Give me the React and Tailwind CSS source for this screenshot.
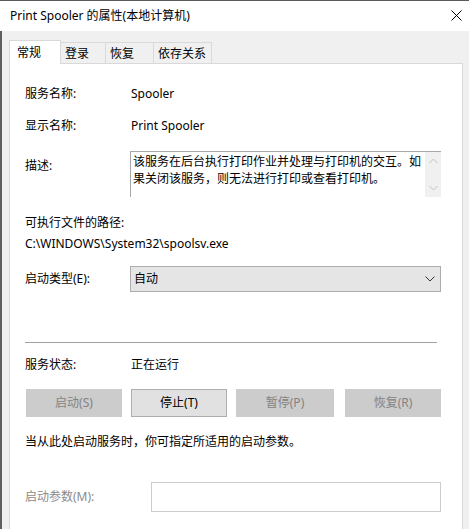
const font = { fontFamily: '"Noto Sans", "Noto Sans CJK SC", sans-serif' };

function Tab({ label, active, width }) {
  if (active) {
    return (
      <div className={`h-[24px] ${width} bg-white border border-[#d9d9d9] border-b-0 -mb-px relative z-10 pl-[7px] pt-[2px] text-[12px] leading-[20px] text-black`}>
        {label}
      </div>
    );
  }
  return (
    <div className={`h-[21px] ${width} bg-[#f0f0f0] border-t border-r border-[#d9d9d9] pl-[4px] pt-[1px] text-[12px] leading-[20px] text-black`}>
      {label}
    </div>
  );
}

function Btn({ label, disabled, width, ml }) {
  return (
    <div
      className={`h-[28px] ${width} ${ml} flex items-center justify-center text-[12px] border ${
        disabled ? "bg-[#cccccc] border-[#cccccc] text-[#838383]" : "bg-[#e1e1e1] border-[#adadad] text-black"
      }`}
    >
      {label}
    </div>
  );
}

export default function App() {
  return (
    <div className="w-[469px] h-[529px] overflow-hidden flex flex-col bg-white" style={font}>
      {/* title bar */}
      <div className="h-[31px] shrink-0 flex items-center justify-between pl-[10px] pr-[7px] bg-white border-t border-[#5a5a5a]">
        <span className="text-[12px] text-black">Print Spooler 的属性(本地计算机)</span>
        <svg width="11" height="11" viewBox="0 0 11 11" className="mb-[1px]">
          <path d="M0.5 0.5 L10.5 10.5 M10.5 0.5 L0.5 10.5" stroke="#000" strokeWidth="1" />
        </svg>
      </div>

      {/* body */}
      <div className="flex-1 bg-[#f0f0f0] border-l-2 border-[#5f5f5f] pl-[7px] pr-[6px] pt-[9px] flex flex-col">
        <div className="flex items-end">
          <Tab label="常规" active width="w-[52px]" />
          <Tab label="登录" width="w-[45px]" />
          <Tab label="恢复" width="w-[48px]" />
          <Tab label="依存关系" width="w-[58px]" />
        </div>

        <div className="flex-1 bg-white border border-[#d9d9d9] border-b-0 text-[12px] text-black leading-[20px] pl-[15px] pr-[21px]">
          <div className="flex mt-[20px]">
            <span className="w-[106px]">服务名称:</span>
            <span>Spooler</span>
          </div>
          <div className="flex mt-[12px]">
            <span className="w-[106px]">显示名称:</span>
            <span>Print Spooler</span>
          </div>

          <div className="flex mt-[15px]">
            <span className="w-[105px] pt-[5px]">描述:</span>
            <div className="flex-1 h-[46px] flex border-t border-l border-[#a8a8a8]">
              <div className="flex-1 pl-[2px] pt-[1px] leading-[17px]">
                该服务在后台执行打印作业并处理与打印机的交互。如
                <br />
                果关闭该服务，则无法进行打印或查看打印机。
              </div>
              <div className="w-[16px] bg-[#f0f0f0] flex flex-col items-center justify-between py-[6px]">
                <svg width="9" height="6" viewBox="0 0 9 6">
                  <path d="M0.5 5 L4.5 1 L8.5 5" fill="none" stroke="#c2c2c2" strokeWidth="1" />
                </svg>
                <svg width="9" height="6" viewBox="0 0 9 6">
                  <path d="M0.5 1 L4.5 5 L8.5 1" fill="none" stroke="#c2c2c2" strokeWidth="1" />
                </svg>
              </div>
            </div>
          </div>

          <div className="mt-[16px]">可执行文件的路径:</div>
          <div className="mt-[1px]">C:\WINDOWS\System32\spoolsv.exe</div>

          <div className="flex items-center mt-[12px]">
            <span className="w-[105px]">启动类型(E):</span>
            <div className="flex-1 h-[26px] bg-[#e5e5e5] border border-[#adadad] flex items-center justify-between pl-[3px] pr-[5px]">
              <span>自动</span>
              <svg width="10" height="6" viewBox="0 0 10 6">
                <path d="M0.5 0.5 L5 5 L9.5 0.5" fill="none" stroke="#333" strokeWidth="1" />
              </svg>
            </div>
          </div>

          <div className="mt-[50px] mr-[4px] h-px bg-[#a0a0a0]" />

          <div className="flex mt-[12px]">
            <span className="w-[106px]">服务状态:</span>
            <span>正在运行</span>
          </div>

          <div className="flex mt-[14px] pl-[1px]">
            <Btn label="启动(S)" disabled width="w-[96px]" ml="ml-0" />
            <Btn label="停止(T)" width="w-[96px]" ml="ml-[9px]" />
            <Btn label="暂停(P)" disabled width="w-[98px]" ml="ml-[9px]" />
            <Btn label="恢复(R)" disabled width="w-[96px]" ml="ml-[11px]" />
          </div>

          <div className="mt-[15px]">当从此处启动服务时，你可指定所适用的启动参数。</div>

          <div className="flex items-center mt-[30px]">
            <span className="w-[126px] text-[#8a8a8a]">启动参数(M):</span>
            <div className="flex-1 h-[30px] bg-white border border-[#cccccc]" />
          </div>
        </div>
      </div>
    </div>
  );
}
